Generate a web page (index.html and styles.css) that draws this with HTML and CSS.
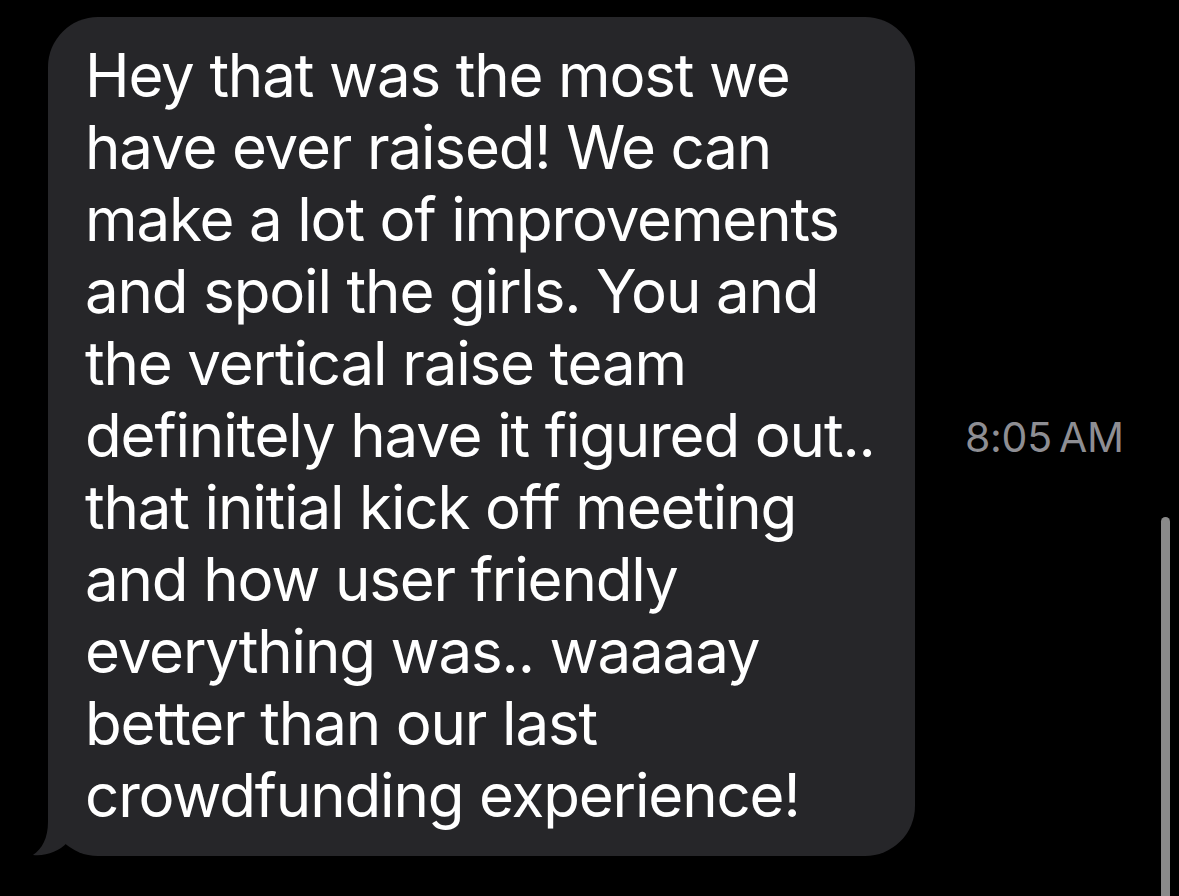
FILE: index.html
```html
<!DOCTYPE html>
<html>
<head>
<meta charset="utf-8">
<link rel="stylesheet" href="styles.css">
</head>
<body>
<div class="thread">
  <div class="row">
    <div class="bubble">
      <p class="text">Hey that was the most we<br>have ever raised! We can<br>make a lot of improvements<br>and spoil the girls. You and<br>the vertical raise team<br>definitely have it figured out..<br>that initial kick off meeting<br>and how user friendly<br>everything was.. waaaay<br>better than our last<br>crowdfunding experience!</p>
      <svg class="tail" width="45" height="58" viewBox="0 0 45 58"><path d="M18 6 L18 22 C18 38 12 49 3 55 C16 56.5 29 51 37 43 L37 6 Z" fill="#262629"/></svg>
    </div>
    <div class="time">8:05&#8201;AM</div>
  </div>
  <div class="scroll"></div>
</div>
</body>
</html>
```

FILE: styles.css
```css
html, body {
  margin: 0;
  padding: 0;
  background: #000;
  height: 100%;
  overflow: hidden;
}
.thread {
  position: relative;
  width: 1179px;
  height: 896px;
  font-family: Inter, "Noto Sans", sans-serif;
}
.row {
  display: flex;
  align-items: center;
  padding: 17px 0 0 48px;
  gap: 50px;
}
.bubble {
  position: relative;
  width: 867px;
  height: 839px;
  box-sizing: border-box;
  background: #262629;
  border-radius: 50px;
  padding: 22px 0 0 37px;
}
.text {
  margin: 0;
  color: #fff;
  font-size: 60px;
  line-height: 72px;
  white-space: nowrap;
  letter-spacing: -1.15px;
}
.tail {
  position: absolute;
  left: -18px;
  top: 783px;
  display: block;
}
.time {
  color: #8e8e93;
  font-size: 41px;
  white-space: nowrap;
  letter-spacing: -0.3px;
}
.scroll {
  position: absolute;
  left: 1161px;
  top: 517px;
  width: 9px;
  height: 420px;
  border-radius: 5px;
  background: #8a8a8a;
}
```
